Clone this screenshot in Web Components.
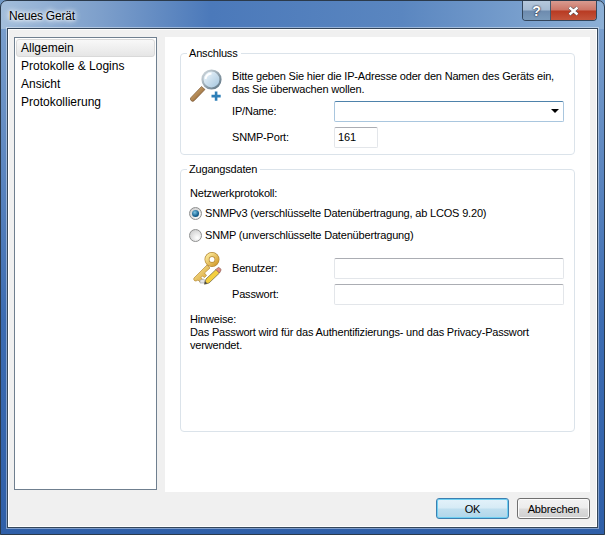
<!DOCTYPE html>
<html>
<head>
<meta charset="utf-8">
<title>Neues Gerät</title>
<style>
    html, body { margin: 0; padding: 0; background: #6f97c4; }
    body { font: 12px "Liberation Sans", sans-serif; color: #000; }
</style>
</head>
<body>
<device-dialog>
    <title-bar slot="title">Neues Gerät</title-bar>
    <nav-list slot="nav">
        <nav-item selected>Allgemein</nav-item>
        <nav-item>Protokolle &amp; Logins</nav-item>
        <nav-item>Ansicht</nav-item>
        <nav-item>Protokollierung</nav-item>
    </nav-list>

    <group-box slot="page" label="Anschluss" height="109">
        <icon-row>
            <svg slot="icon" width="34" height="36" viewBox="0 0 34 36">
                <defs>
                    <linearGradient id="gl" x1="0" y1="0" x2="1" y2="1">
                        <stop offset="0" stop-color="#f6fbfe"/>
                        <stop offset="1" stop-color="#9fc2dc"/>
                    </linearGradient>
                    <linearGradient id="hd" x1="0" y1="0" x2="1" y2="1">
                        <stop offset="0" stop-color="#e8c48a"/>
                        <stop offset="1" stop-color="#7a4a1e"/>
                    </linearGradient>
                    <linearGradient id="rm" x1="0" y1="0" x2="1" y2="1">
                        <stop offset="0" stop-color="#d3dbe0"/>
                        <stop offset="1" stop-color="#5c7383"/>
                    </linearGradient>
                </defs>
                <path d="M11.5 17.5 L1 28.5 a2.2 2.2 0 0 0 3.4 3 L15 20.5z" fill="url(#hd)" stroke="#6b4a2a" stroke-width=".6"/>
                <circle cx="21.5" cy="10.5" r="9" fill="url(#gl)" stroke="url(#rm)" stroke-width="2.2"/>
                <path d="M15.5 10 a6.5 6.5 0 0 1 6 -5.5" fill="none" stroke="#fff" stroke-width="1.8"/>
                <path d="M21.5 25.8 h3.3 v-3.3 h2.6 v3.3 h3.3 v2.6 h-3.3 v3.3 h-2.6 v-3.3 h-3.3z" fill="#2e7fb8"/>
            </svg>
            <info-text class="intro">Bitte geben Sie hier die IP-Adresse oder den Namen des Geräts ein,<br>das Sie überwachen wollen.</info-text>
        </icon-row>
        <field-row label="IP/Name:" indent><combo-box></combo-box></field-row>
        <field-row label="SNMP-Port:" indent><text-box short value="161"></text-box></field-row>
    </group-box>

    <group-box slot="page" label="Zugangsdaten" height="270">
        <info-text class="proto">Netzwerkprotokoll:</info-text>
        <radio-button checked>SNMPv3 (verschlüsselte Datenübertragung, ab LCOS 9.20)</radio-button>
        <radio-button>SNMP (unverschlüsselte Datenübertragung)</radio-button>
        <cred-block>
            <svg slot="icon" width="34" height="38" viewBox="0 0 34 38">
                <defs>
                    <linearGradient id="ky" x1="0" y1="0" x2="1" y2="1">
                        <stop offset="0" stop-color="#fdeb9c"/>
                        <stop offset="1" stop-color="#d39c2e"/>
                    </linearGradient>
                </defs>
                <path d="M17 16 L4 29 a2 2 0 0 0 2 3 l2 -1 l2.5 2.5 l2.5 -2.5 l-2 -2.5 l1.5 -1.5 l2 1.5 l2 -2 l-2 -2.5 L20 19z" fill="url(#ky)" stroke="#b58a38" stroke-width=".7"/>
                <circle cx="22" cy="10.5" r="5" fill="none" stroke="#b58a38" stroke-width="5"/>
                <circle cx="22" cy="10.5" r="5" fill="none" stroke="url(#ky)" stroke-width="3.6"/>
                <path d="M10 31 l4 -1 l1 4 l-5 0z" fill="#e6e6e6" stroke="#a0a0a0" stroke-width=".6"/>
                <path d="M16 30 L26 20.5 l3.5 3.5 L19 34 l-4.5 1.2z" fill="#f5cf3e" stroke="#7a6f4a" stroke-width=".8"/>
                <path d="M26 20.5 l1.6 -1.6 a1.5 1.5 0 0 1 2 0 l1 1 a1.5 1.5 0 0 1 0 2 l-1.1 2.1z" fill="#e58a7c" stroke="#8a5a50" stroke-width=".7"/>
                <path d="M15 32.2 l2.6 2.4 l-3.1 .7z" fill="#4a4a4a"/>
            </svg>
            <field-row slot="fields" label="Benutzer:"><text-box></text-box></field-row>
            <field-row slot="fields" label="Passwort:"><text-box></text-box></field-row>
        </cred-block>
        <info-text class="note">Hinweise:<br>Das Passwort wird für das Authentifizierungs- und das Privacy-Passwort<br>verwendet.</info-text>
    </group-box>

    <push-button slot="buttons" default>OK</push-button>
    <push-button slot="buttons">Abbrechen</push-button>
</device-dialog>

<script>
function shadowFrom(el, html) {
    const shadow = el.attachShadow({ mode: "open" });
    shadow.innerHTML = html;
    return shadow;
}

class DeviceDialog extends HTMLElement {
    constructor() {
        super();
        shadowFrom(this, `
            <style>
                :host {
                    display: flex;
                    flex-direction: column;
                    box-sizing: border-box;
                    width: 605px;
                    height: 535px;
                    border: 1px solid #2b3a4b;
                    border-radius: 7px 7px 0 0;
                    background:
                        linear-gradient(90deg, #a3bedb 0, #7d9fcb 100px, #4b79ba 210px, #5a86c0 400px, #8db0d6 605px) top / 100% 28px no-repeat,
                        linear-gradient(#7fa3cf 0, #3c6cb2 60%, #2f5fa8 100%);
                    overflow: hidden;
                }
                #client {
                    flex: 1;
                    display: flex;
                    flex-direction: column;
                    margin: 0 6px 6px 6px;
                    border: 1px solid #34465a;
                    background: #f0f0f0;
                    padding: 8px 7px 0 6px;
                    box-shadow: 0 0 0 1px rgba(255,255,255,.4), inset 0 0 0 1px #fff;
                }
                #main { display: flex; gap: 8px; height: 455px; }
                #page {
                    flex: 1;
                    display: flex;
                    flex-direction: column;
                    gap: 7px;
                    background: #fff;
                    padding: 9px 15px 0 15px;
                }
                #buttons {
                    display: flex;
                    justify-content: flex-end;
                    gap: 8px;
                    margin-top: 6px;
                }
            </style>
            <slot name="title"></slot>
            <div id="client">
                <div id="main">
                    <slot name="nav"></slot>
                    <div id="page"><slot name="page"></slot></div>
                </div>
                <div id="buttons"><slot name="buttons"></slot></div>
            </div>
        `);
    }
}

class TitleBar extends HTMLElement {
    constructor() {
        super();
        shadowFrom(this, `
            <style>
                :host {
                    display: flex;
                    height: 27px;
                    padding-left: 8px;
                    font-size: 12px;
                    letter-spacing: -0.2px;
                    color: #000;
                }
                #text {
                    margin-top: 8px;
                    height: 14px;
                    line-height: 14px;
                    text-shadow: 0 0 6px #fff, 0 0 6px #fff, 0 0 3px #fff;
                }
                #caption {
                    display: flex;
                    margin-left: auto;
                    margin-right: 7px;
                    height: 20px;
                    border: 1px solid #33465c;
                    border-top: 0;
                    border-radius: 0 0 4px 4px;
                    overflow: hidden;
                    box-sizing: border-box;
                }
                .btn {
                    display: flex;
                    align-items: center;
                    justify-content: center;
                    font: bold 14px "Liberation Sans", sans-serif;
                    letter-spacing: 0;
                    color: #fff;
                    text-shadow: 0 0 1px #223, 0 0 2px #223;
                }
                #help {
                    width: 27px;
                    background: linear-gradient(#b5c8dc 0, #a4bad2 48%, #6d8bae 52%, #7a9abb 100%);
                    border-right: 1px solid #46586c;
                }
                #close {
                    width: 45px;
                    background: linear-gradient(#d99b90 0, #cc7566 48%, #b83a22 52%, #c4553c 100%);
                }
            </style>
            <div id="text"><slot></slot></div>
            <div id="caption">
                <div class="btn" id="help">?</div>
                <div class="btn" id="close">
                    <svg width="15" height="10" viewBox="0 0 15 10">
                        <path d="M3.5 1.5 L11.5 8.5 M11.5 1.5 L3.5 8.5" stroke="#3a3f4a" stroke-width="3.6"/>
                        <path d="M3.5 1.5 L11.5 8.5 M11.5 1.5 L3.5 8.5" stroke="#fff" stroke-width="2.4"/>
                    </svg>
                </div>
            </div>
        `);
    }
}

class NavList extends HTMLElement {
    constructor() {
        super();
        shadowFrom(this, `
            <style>
                :host {
                    display: block;
                    box-sizing: border-box;
                    width: 143px;
                    height: 453px;
                    background: #fff;
                    border: 1px solid #6f7f8f;
                    padding: 1px;
                }
            </style>
            <slot></slot>
        `);
    }
}

class NavItem extends HTMLElement {
    constructor() {
        super();
        shadowFrom(this, `
            <style>
                :host {
                    display: block;
                    box-sizing: border-box;
                    height: 18px;
                    line-height: 16px;
                    padding-left: 4px;
                    border: 1px solid transparent;
                    font-size: 12px;
                }
                :host([selected]) {
                    border: 1px solid #d9d9d9;
                    border-radius: 3px;
                    background: linear-gradient(#f8f8f8, #e6e6e6);
                }
            </style>
            <slot></slot>
        `);
    }
}

class GroupBox extends HTMLElement {
    constructor() {
        super();
        shadowFrom(this, `
            <style>
                :host {
                    display: block;
                    font-size: 11px;
                    letter-spacing: -0.18px;
                }
                fieldset {
                    box-sizing: border-box;
                    height: var(--h);
                    margin: 0;
                    padding: 9px 10px 0 9px;
                    border: 1px solid #dbe3ea;
                    border-radius: 4px;
                }
                legend {
                    padding: 0 3px 0 2px;
                    margin-left: -3px;
                    line-height: 14px;
                }
            </style>
            <fieldset>
                <legend></legend>
                <slot></slot>
            </fieldset>
        `);
        this.shadowRoot.querySelector("legend").textContent = this.getAttribute("label");
        this.style.setProperty("--h", this.getAttribute("height") + "px");
    }
}

class IconRow extends HTMLElement {
    constructor() {
        super();
        shadowFrom(this, `
            <style>
                :host { display: flex; gap: 8px; height: 29px; }
                ::slotted(svg) { flex: none; }
            </style>
            <slot name="icon"></slot>
            <slot></slot>
        `);
    }
}

class InfoText extends HTMLElement {
    constructor() {
        super();
        shadowFrom(this, `
            <style>
                :host { display: block; line-height: 13px; }
                :host(.intro) { margin-top: 1px; }
                :host(.proto) { margin-top: 2px; height: 20px; }
                :host(.note) { margin-top: 6px; }
            </style>
            <slot></slot>
        `);
    }
}

class FieldRow extends HTMLElement {
    constructor() {
        super();
        shadowFrom(this, `
            <style>
                :host {
                    display: flex;
                    align-items: center;
                    height: 26px;
                }
                :host([indent]) { margin-left: 42px; }
                #label { width: 102px; flex: none; }
                #ctl { flex: 1; display: flex; }
            </style>
            <div id="label"></div>
            <div id="ctl"><slot></slot></div>
        `);
        this.shadowRoot.querySelector("#label").textContent = this.getAttribute("label");
    }
}

class CredBlock extends HTMLElement {
    constructor() {
        super();
        shadowFrom(this, `
            <style>
                :host { display: flex; gap: 8px; margin-top: 13px; }
                ::slotted(svg) { flex: none; margin-top: -6px; }
                #fields { flex: 1; }
            </style>
            <slot name="icon"></slot>
            <div id="fields"><slot name="fields"></slot></div>
        `);
    }
}

class ComboBox extends HTMLElement {
    constructor() {
        super();
        shadowFrom(this, `
            <style>
                :host {
                    display: flex;
                    align-items: center;
                    justify-content: flex-end;
                    box-sizing: border-box;
                    flex: 1;
                    height: 21px;
                    border: 1px solid #a9c6de;
                    border-top-color: #4e82ab;
                    border-radius: 2px;
                    background: #fff;
                    padding-right: 4px;
                }
                i {
                    width: 0;
                    height: 0;
                    border: 4px solid transparent;
                    border-top: 4px solid #000;
                    border-bottom: 0;
                }
            </style>
            <i></i>
        `);
    }
}

class TextBox extends HTMLElement {
    constructor() {
        super();
        shadowFrom(this, `
            <style>
                :host {
                    display: block;
                    box-sizing: border-box;
                    flex: 1;
                    height: 21px;
                    line-height: 19px;
                    border: 1px solid #e3e6ea;
                    border-top-color: #abadb3;
                    border-radius: 2px;
                    padding-left: 3px;
                    background: #fff;
                }
                :host([short]) { flex: none; width: 44px; }
            </style>
            <span></span>
        `);
        this.shadowRoot.querySelector("span").textContent = this.getAttribute("value") || "";
    }
}

class RadioButton extends HTMLElement {
    constructor() {
        super();
        shadowFrom(this, `
            <style>
                :host {
                    display: flex;
                    align-items: center;
                    gap: 3px;
                    height: 13px;
                    margin-bottom: 9px;
                    margin-left: -1px;
                    line-height: 13px;
                }
                i {
                    flex: none;
                    box-sizing: border-box;
                    width: 13px;
                    height: 13px;
                    border-radius: 50%;
                    border: 1px solid #8e8f8f;
                    background: radial-gradient(circle at 65% 70%, #fff, #d0d0d0 80%);
                    display: flex;
                    align-items: center;
                    justify-content: center;
                }
                :host([checked]) b {
                    width: 7px;
                    height: 7px;
                    border-radius: 50%;
                    background: radial-gradient(circle at 40% 35%, #7cc4e4, #145f8e 60%, #0b3f66);
                }
            </style>
            <i><b></b></i>
            <slot></slot>
        `);
    }
}

class PushButton extends HTMLElement {
    constructor() {
        super();
        shadowFrom(this, `
            <style>
                :host {
                    display: flex;
                    align-items: center;
                    justify-content: center;
                    box-sizing: border-box;
                    width: 73px;
                    height: 21px;
                    border: 1px solid #707070;
                    border-radius: 3px;
                    background: linear-gradient(#f3f3f3 0, #ececec 48%, #dcdcdc 52%, #d0d0d0 100%);
                    box-shadow: inset 0 0 0 1px #fbfbfb;
                    font-size: 11px;
                    letter-spacing: -0.18px;
                }
                :host([default]) {
                    border-color: #3c7fb1;
                    background: linear-gradient(#e3f2fa 0, #d6ebf6 48%, #bfdfef 52%, #b0d6ea 100%);
                    box-shadow: inset 0 0 0 1px #6fd0f2;
                }
            </style>
            <slot></slot>
        `);
    }
}

customElements.define("device-dialog", DeviceDialog);
customElements.define("title-bar", TitleBar);
customElements.define("nav-list", NavList);
customElements.define("nav-item", NavItem);
customElements.define("group-box", GroupBox);
customElements.define("icon-row", IconRow);
customElements.define("info-text", InfoText);
customElements.define("field-row", FieldRow);
customElements.define("cred-block", CredBlock);
customElements.define("combo-box", ComboBox);
customElements.define("text-box", TextBox);
customElements.define("radio-button", RadioButton);
customElements.define("push-button", PushButton);
</script>
</body>
</html>
